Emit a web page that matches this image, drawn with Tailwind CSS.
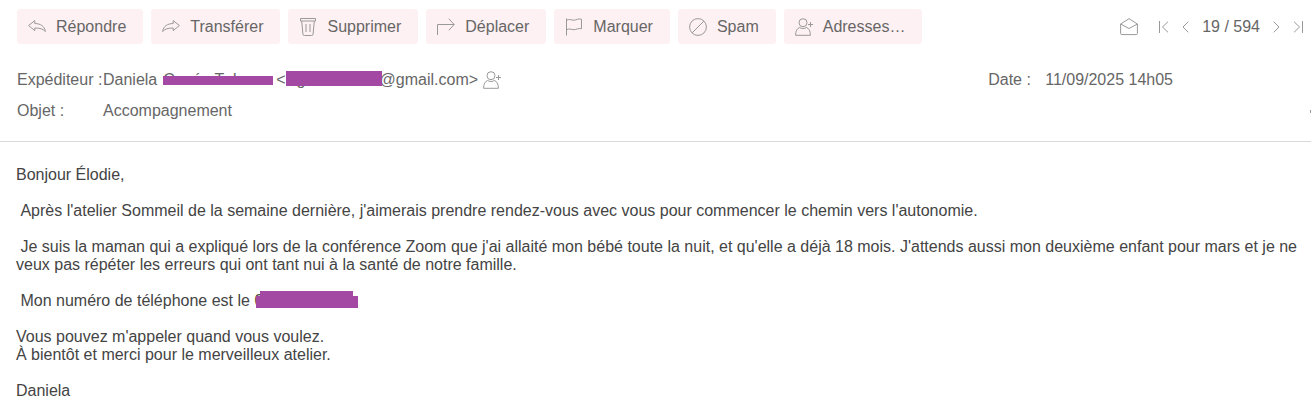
<!DOCTYPE html>
<html lang="fr">
<head>
  <meta charset="UTF-8">
  <meta name="viewport" content="width=device-width, initial-scale=1.0">
  <title>Accompagnement</title>
  <script src="https://cdn.jsdelivr.net/npm/@tailwindcss/browser@4"></script>
</head>
<body class="bg-white font-['Liberation_Sans',Arial,sans-serif] text-base text-[#666]">
  <!-- Toolbar -->
  <header class="flex items-center justify-between pt-[9px] pl-[17px] pr-2">
    <div class="flex gap-2">
      <button class="flex h-[35px] items-center gap-[10px] rounded-[3px] bg-[#fef1f3] pl-[11px] pr-[17px]">
        <svg class="size-[18px]" viewBox="0 0 18 18" fill="none" stroke="#999" stroke-linejoin="round"><path d="M.6 7.500 6.800 2.600v2.900c5.700.2 9.600 2.400 10.600 8-2.500-2.600-5.500-3.500-10.600-3.500v2.700z"/></svg>
        Répondre
      </button>
      <button class="flex h-[35px] items-center gap-[10px] rounded-[3px] bg-[#fef1f3] pl-[11px] pr-[17px]">
        <svg class="size-[18px]" viewBox="0 0 18 18" fill="none" stroke="#999" stroke-linejoin="round"><path d="M17.400 7.500 11.200 2.600v2.900C5.500 5.700 1.600 7.900.6 13.500c2.500-2.600 5.500-3.500 10.600-3.500v2.700z"/></svg>
        Transférer
      </button>
      <button class="flex h-[35px] items-center gap-[10px] rounded-[3px] bg-[#fef1f3] pl-[11px] pr-[17px]">
        <svg class="size-[18px]" viewBox="0 0 18 18" fill="none" stroke="#999"><path d="M1.500.5h15v2.500h-15zM2.700 3l1.200 13q.1 1.500 1.400 1.500h7.400q1.300 0 1.400-1.500l1.200-13M7 6v8M11 6v8"/></svg>
        Supprimer
      </button>
      <button class="flex h-[35px] items-center gap-[10px] rounded-[3px] bg-[#fef1f3] pl-[11px] pr-[17px]">
        <svg class="size-[18px]" viewBox="0 0 18 18" fill="none" stroke="#999"><path d="M.5 17V6.500h16.500M11.800.7l5.400 5.800-5.400 5.800"/></svg>
        Déplacer
      </button>
      <button class="flex h-[35px] items-center gap-[10px] rounded-[3px] bg-[#fef1f3] pl-[11px] pr-[17px]">
        <svg class="size-[18px]" viewBox="0 0 18 18" fill="none" stroke="#999"><path d="M1.500.5v17M1.500 2.200c3-1.500 5 0 7.500 0s4-2 7.500-1v9.500c-3.500-.8-5 1-7.500 1s-4.500-1.500-7.500 0"/></svg>
        Marquer
      </button>
      <button class="flex h-[35px] items-center gap-[10px] rounded-[3px] bg-[#fef1f3] pl-[11px] pr-[17px]">
        <svg class="size-[18px]" viewBox="0 0 18 18" fill="none" stroke="#999"><circle cx="9" cy="9" r="8.400"/><path d="M3.100 14.900 14.900 3.100"/></svg>
        Spam
      </button>
      <button class="flex h-[35px] items-center gap-[10px] rounded-[3px] bg-[#fef1f3] pl-[11px] pr-[17px]">
        <svg class="size-[18px]" viewBox="0 0 18 18" fill="none" stroke="#999" stroke-linejoin="round"><circle cx="8" cy="4.700" r="4"/><path d="M4.500 9.500C2 10.500.6 13 .6 17.300h14.800c0-4.300-1.400-6.800-3.900-7.800-2 1.300-5 1.300-7 0zM15.500 4v5M13 6.500h5"/></svg>
        Adresses…
      </button>
    </div>
    <div class="flex items-center">
      <button class="mr-[21px]" aria-label="Non lu">
        <svg class="size-[18px]" viewBox="0 0 18 18" fill="none" stroke="#999" stroke-linejoin="round"><path d="M.6 6 9 .7 17.400 6v9.400q0 1.200-1.200 1.200H1.800q-1.200 0-1.200-1.200zl8.400 4.500L17.400 6"/></svg>
      </button>
      <nav class="flex items-center gap-[13px]">
        <button aria-label="Premier"><svg class="h-3 w-[10px]" viewBox="0 0 10 12" fill="none" stroke="#999"><path d="M.5 0v12M9 .7 3.500 6 9 11.300"/></svg></button>
        <button aria-label="Précédent"><svg class="h-3 w-[7px]" viewBox="0 0 7 12" fill="none" stroke="#999"><path d="M6.300.7 1 6l5.300 5.300"/></svg></button>
        <span>19 / 594</span>
        <button aria-label="Suivant"><svg class="h-3 w-[7px]" viewBox="0 0 7 12" fill="none" stroke="#999"><path d="M.7.7 6 6 .7 11.300"/></svg></button>
        <button aria-label="Dernier"><svg class="h-3 w-[10px]" viewBox="0 0 10 12" fill="none" stroke="#999"><path d="M9.500 0v12M1 .7 6.500 6 1 11.300"/></svg></button>
      </nav>
    </div>
  </header>

  <!-- Message details -->
  <section class="border-b border-[#d9d9d9] pt-[26px] pb-[20px] pl-[17px]">
    <div class="flex justify-between leading-5">
      <div class="flex">
        <span class="w-[86px] whitespace-nowrap">Expéditeur :</span>
        <span>Daniela</span>
        <span class="relative ml-[6px] w-[110px] overflow-hidden whitespace-pre">C    é   T  l<span class="absolute inset-x-0 top-[6px] h-[9px] bg-[#a349a4]"></span></span>
        <span class="ml-[3px]">&lt;</span>
        <span class="relative w-[94px] pl-[11px]">g<span class="absolute top-px left-0 h-[15px] w-24 bg-[#a349a4]"></span></span>
        <span>@gmail.com&gt;</span>
        <button class="ml-[5px]" aria-label="Ajouter aux contacts">
          <svg class="size-[18px]" viewBox="0 0 18 18" fill="none" stroke="#999" stroke-linejoin="round"><circle cx="8" cy="4.700" r="4"/><path d="M4.500 9.500C2 10.500.6 13 .6 17.300h14.800c0-4.300-1.400-6.800-3.900-7.800-2 1.300-5 1.300-7 0zM15.500 4v5M13 6.500h5"/></svg>
        </button>
      </div>
      <div class="flex pr-[138px]">
        <span class="w-[57px]">Date :</span>
        <span>11/09/2025 14h05</span>
      </div>
    </div>
    <div class="mt-[11px] flex items-center leading-5">
      <span class="w-[86px]">Objet :</span>
      <span>Accompagnement</span>
      <span class="ml-auto h-[3px] w-px bg-[#999]"></span>
    </div>
  </section>

  <!-- Message body -->
  <main class="flex flex-col gap-[18px] px-3 pt-6 pl-4 leading-[18px] text-[#444]">
    <p>Bonjour Élodie,</p>
    <p>&nbsp;Après l'atelier Sommeil de la semaine dernière, j'aimerais prendre rendez-vous avec vous pour commencer le chemin vers l'autonomie.</p>
    <p>&nbsp;Je suis la maman qui a expliqué lors de la conférence Zoom que j'ai allaité mon bébé toute la nuit, et qu'elle a déjà 18 mois. J'attends aussi mon deuxième enfant pour mars et je ne veux pas répéter les erreurs qui ont tant nui à la santé de notre famille.</p>
    <p>&nbsp;Mon numéro de téléphone est le <span class="relative">0<span class="absolute -top-px left-[6px] h-[5px] w-[93px] bg-[#a349a4]"></span><span class="absolute top-1 left-[2px] h-3 w-[102px] bg-[#a349a4]"></span></span></p>
    <p>Vous pouvez m'appeler quand vous voulez.<br>À bientôt et merci pour le merveilleux atelier.</p>
    <p>Daniela</p>
  </main>
</body>
</html>
